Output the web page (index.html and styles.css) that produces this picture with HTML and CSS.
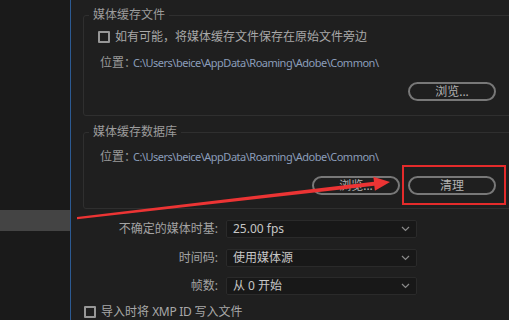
FILE: index.html
```html
<!DOCTYPE html>
<html lang="zh-CN">
<head>
    <meta charset="UTF-8">
    <meta name="viewport" content="width=device-width, initial-scale=1.0">
    <title>媒体缓存</title>
    <link rel="stylesheet" href="styles.css">
</head>
<body>
    <div class="window">
        <aside class="sidebar">
            <div class="side-item active"></div>
        </aside>

        <main class="panel">
            <fieldset class="group group-files">
                <legend>媒体缓存文件</legend>
                <label class="check-row">
                    <span class="checkbox"></span>如有可能，将媒体缓存文件保存在原始文件旁边
                </label>
                <div class="location">位置：<span class="path">C:\Users\beice\AppData\Roaming\Adobe\Common\</span></div>
                <div class="buttons">
                    <button class="btn">浏览...</button>
                </div>
            </fieldset>

            <fieldset class="group group-db">
                <legend>媒体缓存数据库</legend>
                <div class="location">位置：<span class="path">C:\Users\beice\AppData\Roaming\Adobe\Common\</span></div>
                <div class="buttons">
                    <button class="btn">浏览...</button>
                    <button class="btn">清理</button>
                </div>
            </fieldset>

            <div class="form">
                <div class="form-label">不确定的媒体时基:</div>
                <div class="select">25.00 fps
                    <svg class="chevron" width="9" height="6" viewBox="0 0 9 6"><polyline points="1,1 4.5,4.5 8,1" fill="none" stroke="#8a8a8a" stroke-width="1.2"/></svg>
                </div>
                <div class="form-label">时间码:</div>
                <div class="select">使用媒体源
                    <svg class="chevron" width="9" height="6" viewBox="0 0 9 6"><polyline points="1,1 4.5,4.5 8,1" fill="none" stroke="#8a8a8a" stroke-width="1.2"/></svg>
                </div>
                <div class="form-label">帧数:</div>
                <div class="select">从 0 开始
                    <svg class="chevron" width="9" height="6" viewBox="0 0 9 6"><polyline points="1,1 4.5,4.5 8,1" fill="none" stroke="#8a8a8a" stroke-width="1.2"/></svg>
                </div>
            </div>

            <label class="check-row bottom-check">
                <span class="checkbox"></span><span>导入时将 <span class="xmp">XMP ID</span> 写入文件</span>
            </label>
        </main>

        <!-- annotation -->
        <div class="mark-box"></div>
        <svg class="arrow" width="509" height="320" viewBox="0 0 509 320">
            <polygon points="77,217 374,181.8 373.3,176.8 390,182 374.9,190.8 374.3,185.8 77,219.2" fill="#ec3434"/>
        </svg>
    </div>
</body>
</html>
```

FILE: styles.css
```css
body, html {
    margin: 0;
    padding: 0;
    height: 100%;
    overflow: hidden;
    background-color: #1f1f1f;
}
.window {
    position: relative;
    display: flex;
    width: 509px;
    height: 320px;
    overflow: hidden;
    font-family: "Noto Sans", "Noto Sans CJK SC", sans-serif;
    font-size: 12px;
    line-height: 16px;
    color: #a3a3a3;
}
.sidebar {
    width: 70px;
    flex-shrink: 0;
    background: #1a1a1a;
    border-right: 1px solid #2c5a92;
}
.side-item {
    height: 21px;
}
.side-item.active {
    margin-top: 210px;
    background: #444;
}
.panel {
    flex: 1;
    min-width: 0;
    display: flex;
    flex-direction: column;
}
.group {
    margin: 7px -8px 0 12px;
    padding: 0 20px 14px 14px;
    border: 1px solid #2f2f2f;
    border-radius: 3px;
    min-width: 0;
}
.group-db {
    margin-top: 8px;
    padding-bottom: 13px;
}
.group legend {
    margin-left: -9px;
    padding: 0 4px;
    line-height: 16px;
    color: #9c9c9c;
}
.check-row {
    display: flex;
    align-items: center;
    gap: 5px;
    height: 16px;
    margin-top: 6px;
    color: #a8a8a8;
}
.checkbox {
    width: 12px;
    height: 12px;
    flex-shrink: 0;
    box-sizing: border-box;
    border: 2px solid #979797;
    border-radius: 1px;
}
.location {
    height: 16px;
    margin-top: 10px;
    padding-left: 2px;
    color: #9a9a9a;
    white-space: nowrap;
}
.group-db .location {
    margin-top: 9px;
}
.path {
    margin-left: -3px;
    font-size: 11px;
    letter-spacing: -0.5px;
    color: #8b9dba;
}
.buttons {
    display: flex;
    justify-content: flex-end;
    gap: 8px;
    margin-top: 11px;
}
.btn {
    width: 88px;
    height: 19px;
    box-sizing: border-box;
    padding: 0;
    border: 2px solid #787878;
    border-radius: 10px;
    background: transparent;
    color: #b2b2b2;
    font: inherit;
    line-height: 15px;
}
.form {
    display: grid;
    grid-template-columns: 147px 191px;
    grid-auto-rows: 18px;
    column-gap: 8px;
    row-gap: 10.5px;
    margin-top: 11px;
}
.form-label {
    text-align: right;
    line-height: 18px;
    color: #a3a3a3;
}
.select {
    position: relative;
    box-sizing: border-box;
    padding-left: 6px;
    border: 1px solid #2a2a2a;
    border-radius: 2px;
    background: #181818;
    color: #c6c6c6;
    line-height: 16px;
}
.chevron {
    position: absolute;
    right: 6px;
    top: 5px;
}
.bottom-check {
    margin: 9px 0 0 13px;
}
.xmp {
    letter-spacing: -0.3px;
}
.mark-box {
    position: absolute;
    left: 402px;
    top: 165px;
    width: 104px;
    height: 40px;
    box-sizing: border-box;
    border: 2px solid #e42b2b;
}
.arrow {
    position: absolute;
    left: 0;
    top: 0;
    pointer-events: none;
}
```
